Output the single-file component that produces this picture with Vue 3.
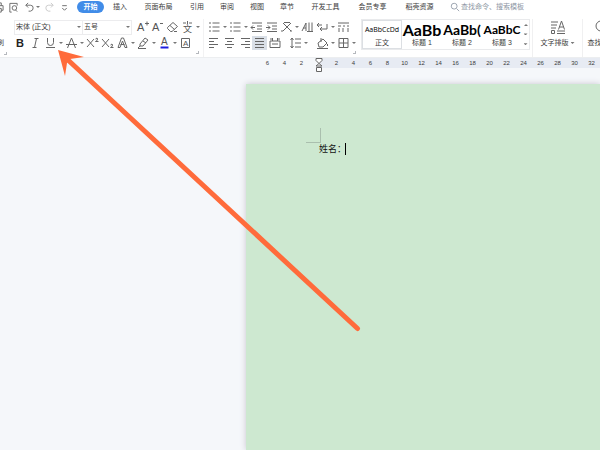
<script setup>
import { ref } from 'vue'

const tabs = ['插入', '页面布局', '引用', '审阅', '视图', '章节', '开发工具', '会员专享', '稻壳资源']
const font = ref('宋体 (正文)')
const size = ref('五号')
const query = ref('')

// Every glyph is drawn on a 15 x 14 grid: d = strokes, t = letters [x, baseline, size, text, style]
const fontTop = [
  { name: '增大字号', t: [[2, 11, 11, 'A']], d: 'M10 3.500h4M12 1.500v4' },
  { name: '减小字号', t: [[2, 11, 11, 'A']], d: 'M10 3.500h3' },
  { name: '清除格式', d: 'M2.500 7.500L8 2.500l4.500 4L7 11.500H5.500l-3-3zM5 5.500l4.500 4M9 11.500h3' },
  { name: '拼音指南', caret: true, t: [[3, 12, 9, '文']], d: 'M3 3h3M9 3h3M7.500 1v3' }
]
const fontBottom = [
  { name: '加粗', t: [[3, 11, 11, 'B', 'bold']] },
  { name: '倾斜', d: 'M6.500 2.500h4M4.500 11.500h4M8.500 2.500l-2 9' },
  { name: '下划线', caret: true, d: 'M4.500 2v4.500q0 3 3 3t3-3V2M3 11.500h9' },
  { name: '删除线', caret: true, d: 'M3.500 12L7.500 2l4 10M2 8.500h11' },
  { name: '上标', d: 'M2 3l7 8M9 3l-7 8M10.500 3q2-2 2 0t-2 2.500h3' },
  { name: '下标', d: 'M2 3l7 8M9 3l-7 8M10.500 9q2-2 2 0t-2 2.500h3' },
  { name: '文字效果', caret: true, d: 'M3 11.500L6.500 2h2L12 11.500h-2L7.500 5 5 11.500zM5.500 8.500h4' },
  { name: '突出显示', caret: true, d: 'M4 8l5-6 3 2-5 6H4zM7 5l3 2M2 12.500h8M4 10l-2 2' },
  { name: '字体颜色', caret: true, t: [[4, 9, 10, 'A']], blue: 'M3.500 11.500h8' },
  { name: '字符边框', t: [[5, 10, 8, 'A']], d: 'M3.500 2.500h8v9h-8z' }
]
const paraTop = [
  { name: '项目符号', caret: true, d: 'M5.500 3h7M5.500 7h7M5.500 11h7M2 3h2M2 7h2M2 11h2' },
  { name: '编号', caret: true, d: 'M5.500 3h7M5.500 7h7M5.500 11h7M3 2v2M2 7h2M3 10v2' },
  { name: '减少缩进', d: 'M3 3h10M8 6h5M8 9h5M3 11.500h10M6 7.500H2l2-2M2 7.500l2 2' },
  { name: '增加缩进', d: 'M3 3h10M8 6h5M8 9h5M3 11.500h10M2 7.500h4l-2-2M6 7.500l-2 2' },
  { name: '中文版式', caret: true, d: 'M4 3l8 8M12 3l-8 8M2 11h2M11 11h2M5 2.500h6' },
  { name: '排序', d: 'M2 11l4-8v8M3 8h3M9 2.500v9M12 2.500v9M7 11.500h6' },
  { name: '换行', caret: true, d: 'M2 5h5M4 3L2 5l2 2M12 4v5H5M7 7L5 9l2 2' },
  { name: '制表位', d: 'M2 3h11M2 6h3M7 6h2M11 6h2M3 8v4M7 8v4M12 8v4' }
]
const paraBottom = [
  { name: '左对齐', d: 'M2 2.500h9M2 5.500h5M2 8.500h9M2 11.500h5' },
  { name: '居中', d: 'M3 2.500h9M5 5.500h5M3 8.500h9M5 11.500h5' },
  { name: '右对齐', d: 'M4 2.500h9M8 5.500h5M4 8.500h9M8 11.500h5' },
  { name: '两端对齐', on: true, d: 'M3 2.500h9M3 5.500h9M3 8.500h9M3 11.500h9' },
  { name: '分散对齐', end: true, d: 'M3 5v6.500h10V5zM5 8h6M3 3h3M10 3h3M5.500 2v3M10.500 2v3' },
  { name: '行距', caret: true, end: true, d: 'M7 3h6M7 7h6M7 11h6M4 2v10M2.500 4L4 2l1.500 2M2.500 10L4 12l1.500-2' },
  { name: '底纹', caret: true, d: 'M3 7l5-4 4 4-4 4H4zM6 2v4M2 12.500h11M12.500 8v2' },
  { name: '边框', caret: true, d: 'M3 2.500h9v9H3zM7.500 2.500v9M3 7h9' }
]
const toolRows = [
  { key: 'font', rows: [fontTop, fontBottom] },
  { key: 'para', rows: [paraTop, paraBottom] }
]
const styles = [
  { label: '正文', sample: 'AaBbCcDd', kind: 'body' },
  { label: '标题 1', sample: 'AaBb', kind: 'h1' },
  { label: '标题 2', sample: 'AaBb(', kind: 'h2' },
  { label: '标题 3', sample: 'AaBbC', kind: 'h3' }
]
const before = [6, 4, 2]
const after = Array.from({ length: 16 }, (_, i) => (i + 1) * 2)
</script>

<template>
  <div class="app">
    <header class="ribbon">
      <nav class="menu">
        <div class="quick">
          <button class="q print" aria-label="打印"><svg viewBox="0 0 12 12"><path d="M3 4V1h6v3M3 9H1V4h10v5H9M3 7h6v4H3z" /></svg></button>
          <button class="q" aria-label="打印预览"><svg viewBox="0 0 12 12"><path d="M4 11H2V1.500h8V4M10 10.500l-2-2" /><circle cx="7" cy="6.500" r="2.500" /></svg></button>
          <button class="q undo" aria-label="撤销"><svg viewBox="0 0 12 12"><path d="M4.500 1L2 3.500 4.500 6M2 3.500h5q3 0 3 3t-3 3.500H5" /></svg><i class="caret"></i></button>
          <button class="q off" aria-label="恢复"><svg viewBox="0 0 12 12"><path d="M7.500 1L10 3.500 7.500 6M10 3.500H5q-3 0-3 3T5 10h2" /></svg></button>
          <button class="q more" aria-label="自定义"><svg viewBox="0 0 12 12"><path d="M3.500 4h5M3.500 6.500L6 9l2.500-2.500" /></svg></button>
        </div>
        <a class="current" href="#start">开始</a>
        <a v-for="t in tabs" :key="t" class="tab" :class="{ wide: t.length > 2 }" href="#tab">{{ t }}</a>
        <label class="search">
          <svg viewBox="0 0 12 12"><circle cx="5" cy="5" r="3.500" /><path d="M8 8l3 3" /></svg>
          <input v-model="query" type="text" placeholder="查找命令、搜索模板" aria-label="查找命令" />
        </label>
      </nav>

      <div class="tools">
        <div class="clip"><button class="brush">刷</button><i class="corner"></i></div>
        <section v-for="g in toolRows" :key="g.key" class="group" :class="g.key">
          <div v-for="(row, n) in g.rows" :key="n" class="row">
            <div v-if="g.key === 'font' && n === 0" class="pickers">
              <span class="pick family">
                <select v-model="font" aria-label="字体"><option>宋体 (正文)</option></select><i class="caret"></i>
              </span>
              <span class="pick size">
                <select v-model="size" aria-label="字号"><option>五号</option></select><i class="caret"></i>
              </span>
            </div>
            <button v-for="b in row" :key="b.name" class="tool" :class="{ on: b.on, end: b.end }" :aria-label="b.name">
              <svg viewBox="0 0 15 14">
                <path v-if="b.d" :d="b.d" />
                <path v-if="b.blue" class="blue" :d="b.blue" />
                <text v-for="t in b.t" :key="t[3]" :x="t[0]" :y="t[1]" :font-size="t[2]" :class="t[4]">{{ t[3] }}</text>
              </svg>
              <i v-if="b.caret" class="caret"></i>
            </button>
          </div>
          <i class="corner"></i>
        </section>

        <section class="gallery">
          <button v-for="s in styles" :key="s.label" class="style" :class="s.kind">
            <span class="sample">{{ s.sample }}</span>
            <span class="name">{{ s.label }}</span>
          </button>
          <div class="scroll"><i class="caret up"></i><i class="caret"></i><i class="caret last"></i></div>
        </section>

        <button class="big">
          <svg viewBox="0 0 16 16"><path d="M1 3h7M1 6h6M1 9h5M8.500 10.500L11.500 2l3 8.500M9.500 8h4M1.500 11.500h3v3h-3zM7 12h8M7 14.500h8" /></svg>
          <span>文字排版<i class="caret"></i></span>
        </button>
        <button class="big find">
          <svg viewBox="0 0 16 16"><circle cx="7" cy="7" r="5" /><path d="M11 11l4 4" /></svg>
          <span>查找替换</span>
        </button>
      </div>
    </header>

    <div class="ruler">
      <div class="outer"><span v-for="n in before" :key="n">{{ n }}</span></div>
      <svg class="marker" viewBox="0 0 8 14"><path d="M1 .5h6v2l-3 3-3-3zM4 5.500L1 8h6zM1.500 9.500h5v4h-5z" /></svg>
      <div class="inner"><span v-for="n in after" :key="n">{{ n }}</span></div>
    </div>

    <main class="desk">
      <article class="page">
        <div class="margin-mark"></div>
        <p>姓名：<span class="cursor"></span></p>
      </article>
    </main>

    <svg class="arrow" viewBox="0 0 600 450" aria-hidden="true">
      <path class="shaft" d="M357.500 328.500L68 60" />
      <path class="head" d="M58 50l26 7-14 2-3 4-2 13z" />
    </svg>
  </div>
</template>

<style>
body { margin: 0; overflow: hidden; }
</style>

<style scoped>
* { box-sizing: border-box; }
.app {
  position: relative;
  display: flex;
  flex-direction: column;
  min-height: 100vh;
  overflow: hidden;
  background: #f5f7fa;
  color: #3c3c3c;
  font: 7px/10px "Liberation Sans", "Noto Sans CJK SC", sans-serif;
}
button, input, select {
  margin: 0;
  padding: 0;
  border: 0;
  background: none;
  color: inherit;
  font: inherit;
}
svg { flex: none; fill: none; stroke: #666; stroke-width: 1; }
a { color: inherit; text-decoration: none; }
.ribbon { background: #fff; border-bottom: 1px solid #eceef0; }
.menu { display: flex; align-items: center; height: 14px; white-space: nowrap; }
.quick { display: flex; align-items: center; width: 77px; gap: 4px; }
.q { display: flex; align-items: center; gap: 1px; }
.q svg { width: 11px; height: 11px; }
.print { width: 4px; justify-content: flex-end; }
.undo { margin-left: 1px; }
.off { opacity: .35; }
.current {
  width: 27px;
  border-radius: 6px;
  background: #418ce8;
  color: #fff;
  font-weight: bold;
  line-height: 12px;
  text-align: center;
}
.tab { width: 30px; text-align: center; }
.tab.wide { width: 47px; }
.current + .tab { margin-left: 1px; }
.search { display: flex; flex: 1; align-items: center; gap: 1px; margin-left: 7px; min-width: 0; }
.search svg { width: 10px; height: 10px; stroke: #8d96a3; }
.search input { flex: 1; min-width: 0; height: 10px; outline: 0; }
.search input::placeholder { color: #8d96a3; opacity: 1; }

.caret {
  flex: none;
  width: 4px;
  height: 2px;
  background: #777;
  clip-path: polygon(0 0, 100% 0, 50% 100%);
}
.corner {
  align-self: flex-end;
  width: 3px;
  height: 3px;
  margin-right: 3px;
  border: solid #b5b8bd;
  border-width: 0 1px 1px 0;
}
.tools { display: flex; height: 43px; padding-top: 5px; overflow: hidden; }
.clip { display: flex; flex: none; flex-direction: column; width: 10px; padding-top: 19px; }
.brush { display: flex; justify-content: flex-end; width: 4px; white-space: nowrap; }
.clip .corner { margin-top: 4px; }
.group { display: flex; flex: none; flex-direction: column; }
.font { width: 192px; padding-left: 3px; }
.para { width: 158px; padding-left: 3px; border-left: 1px solid #f2f2f3; }
.group.para { margin-left: 1px; }
.para .corner { margin-right: 5px; }
.row { display: flex; align-items: center; height: 16px; }
.pickers { display: flex; width: 122px; padding-left: 1px; }
.pick { display: flex; align-items: center; height: 15px; border: 1px solid #ececee; padding: 0 1px; }
.pick select { flex: 1; min-width: 0; appearance: none; outline: 0; }
.family { width: 69px; }
.size { width: 49px; border-left: 0; }
.tool { display: flex; flex: none; align-items: center; gap: 1px; }
.tool:has(.caret) { width: 21px; }
.tool svg { width: 15px; height: 14px; }
.tool.on { background: #d9dfe7; }
.tool.end { margin-right: 6px; }
.tool text { fill: #555; stroke: none; }
.tool .bold { font-weight: bold; fill: #222; }
.tool .blue { stroke: #1c1ce0; stroke-width: 2; }

.gallery { display: flex; flex: none; width: 169px; height: 31px; border: 1px solid #e9eaec; }
.style { display: flex; flex: none; flex-direction: column; align-items: center; width: 40px; }
.sample {
  height: 18px;
  color: #000;
  font: bold 14px/20px Lato, "Noto Sans", sans-serif;
  white-space: nowrap;
}
.body { box-shadow: inset 0 0 0 1px #dcdfe3; }
.body .sample { font: 7px/19px "Open Sans", "Noto Sans", sans-serif; }
.h1 .sample { font-size: 16px; }
.h3 .sample { font-size: 12px; }
.scroll { display: flex; flex: 1; flex-direction: column; align-items: center; justify-content: space-around; }
.up { transform: rotate(180deg); }
.big {
  display: flex;
  flex: none;
  flex-direction: column;
  align-items: center;
  width: 50px;
  margin-left: 2px;
  border-left: 1px solid #f0f0f1;
  white-space: nowrap;
}
.big svg { width: 16px; height: 16px; margin-bottom: 3px; }
.big span { display: flex; align-items: center; gap: 2px; }
.find { width: 38px; margin-left: 0; }

.ruler { display: flex; flex: none; align-items: flex-start; height: 10px; font-size: 6px; text-align: center; }
.ruler span { flex: none; width: 17px; }
.outer { display: flex; justify-content: flex-end; width: 310px; }
.marker { position: relative; z-index: 1; width: 8px; height: 14px; margin: 0 -3px 0 5px; fill: #fff; }
.inner { display: flex; flex: 1; min-width: 0; overflow: hidden; padding-left: 8px; background: #e7ebf3; }

.desk { display: flex; flex: 1; padding: 16px 0 0 246px; }
.page { flex: 1; padding: 44px 0 0 60px; background: #cde8d0; box-shadow: 0 0 6px #c9c6d0; }
.margin-mark { width: 15px; height: 15px; border: solid #aabfae; border-width: 0 1px 1px 0; }
.page p { display: flex; align-items: center; margin: 0 0 0 13px; color: #111; font-size: 9px; line-height: 12px; }
.cursor { width: 1px; height: 12px; margin-left: -1px; background: #000; }

.arrow { position: absolute; top: 0; left: 0; width: 600px; height: 450px; pointer-events: none; }
.shaft { stroke: #ff6b3b; stroke-width: 5; stroke-linecap: round; }
.head { fill: #ff6b3b; stroke: none; }
</style>
